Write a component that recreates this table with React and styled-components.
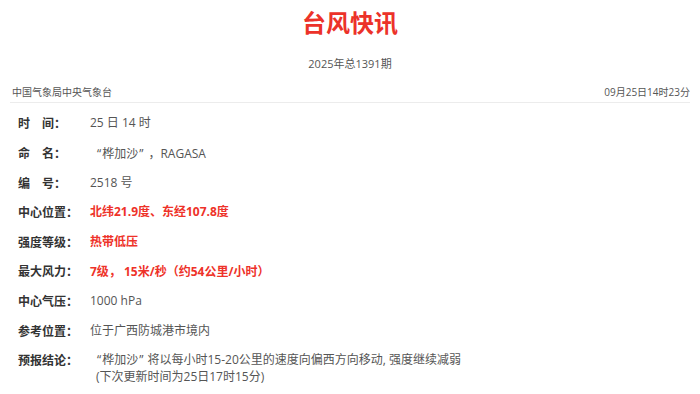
import React from "react";
import styled, { createGlobalStyle } from "styled-components";

const Global = createGlobalStyle`
  html, body { margin: 0; padding: 0; background: #fff; }
  body { font-family: "Open Sans", "Noto Sans CJK SC", sans-serif; }
`;

const Page = styled.div`
  width: 700px;
  padding-top: 6px;
`;

const Title = styled.h1`
  margin: 0;
  text-align: center;
  font-size: 24px;
  line-height: 32px;
  font-weight: 700;
  color: #ec3229;
  font-family: "Noto Sans CJK SC", sans-serif;
`;

const Issue = styled.div`
  margin-top: 18px;
  text-align: center;
  font-size: 11px;
  line-height: 16px;
  color: #555;
`;

const Meta = styled.div`
  margin: 13px 10px 0 10px;
  padding: 0 0 3px 2px;
  display: flex;
  justify-content: space-between;
  font-size: 10px;
  line-height: 14px;
  color: #555;
  border-bottom: 1px solid #ececec;
`;

const List = styled.div`
  padding-top: 5px;
  display: flex;
  flex-direction: column;
`;

const Row = styled.div`
  display: flex;
  padding: 6.2px 0;
  font-size: 12px;
  line-height: 17px;
`;

const Label = styled.div`
  flex: 0 0 72px;
  margin-left: 18px;
  font-weight: 700;
  color: #333;
  font-family: "Noto Sans CJK SC", sans-serif;
`;

const Value = styled.div`
  padding-left: ${(p) => (p.$indent ? "6px" : "0")};
  color: ${(p) => (p.$hot ? "#ee3229" : "#555")};
  font-weight: ${(p) => (p.$hot ? 700 : 400)};
`;

const Cjk = styled.span`
  font-family: "Noto Sans CJK SC", sans-serif;
`;

const Quote = styled.span`
  padding: 0 1px;
`;

const Gap = styled.span`
  margin-left: 4px;
`;

const rows = [
  { label: "时　间：", value: "25 日 14 时" },
  {
    label: "命　名：",
    indent: true,
    value: (
      <>
        <Quote>“</Quote>桦加沙<Quote>”</Quote>
        <Gap />
        <Cjk>，</Cjk>RAGASA
      </>
    ),
  },
  { label: "编　号：", value: "2518 号" },
  { label: "中心位置：", value: "北纬21.9度、东经107.8度", hot: true },
  { label: "强度等级：", value: "热带低压", hot: true },
  {
    label: "最大风力：",
    value: (
      <>
        7级<Cjk>，</Cjk> 15米/秒<Cjk>（</Cjk>约54公里/小时<Cjk>）</Cjk>
      </>
    ),
    hot: true,
  },
  { label: "中心气压：", value: "1000 hPa" },
  { label: "参考位置：", value: "位于广西防城港市境内" },
  {
    label: "预报结论：",
    indent: true,
    value: (
      <>
        <div>
          <Quote>“</Quote>桦加沙<Quote>”</Quote> 将以每小时15-20公里的速度向偏西方向移动, 强度继续减弱
        </div>
        <div>(下次更新时间为25日17时15分)</div>
      </>
    ),
  },
];

export default function App() {
  return (
    <Page>
      <Global />
      <Title>台风快讯</Title>
      <Issue>2025年总1391期</Issue>
      <Meta>
        <span>中国气象局中央气象台</span>
        <span>09月25日14时23分</span>
      </Meta>
      <List>
        {rows.map((r) => (
          <Row key={r.label}>
            <Label>{r.label}</Label>
            <Value $hot={r.hot} $indent={r.indent}>
              {r.value}
            </Value>
          </Row>
        ))}
      </List>
    </Page>
  );
}
